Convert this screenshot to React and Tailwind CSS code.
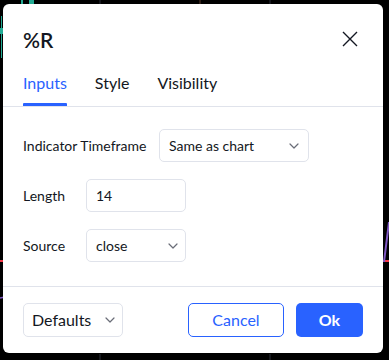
import React from 'react'

function Chevron({ className }) {
  return (
    <svg className={className} width="10" height="6" viewBox="0 0 10 6" fill="none">
      <path d="M1 1l4 4 4-4" stroke="#6a6d78" strokeWidth="1.2" strokeLinecap="round" strokeLinejoin="round" />
    </svg>
  )
}

function ChartBackdrop() {
  return (
    <svg className="absolute inset-0" width="389" height="360" viewBox="0 0 389 360">
      <line x1="0" y1="261" x2="389" y2="261" stroke="#f23645" strokeWidth="2" />
      <line x1="0" y1="298" x2="10" y2="296" stroke="#7e57c2" strokeWidth="1.5" />
      <line x1="384" y1="262" x2="389" y2="222" stroke="#7e57c2" strokeWidth="2" />
      <rect x="21" y="0" width="2" height="4" fill="#22ab94" />
      <rect x="29" y="0" width="5" height="4" fill="#22ab94" />
      <rect x="1" y="16" width="1" height="42" fill="#22ab94" />
      <rect x="0" y="28" width="3" height="6" fill="#22ab94" />
      <line x1="100" y1="0" x2="100" y2="4" stroke="#2a2e39" />
      <line x1="200" y1="0" x2="200" y2="4" stroke="#5d3a2e" />
      <line x1="270" y1="0" x2="270" y2="4" stroke="#2a2e39" />
      <line x1="100" y1="354" x2="100" y2="360" stroke="#2a2e39" />
      <line x1="270" y1="354" x2="270" y2="360" stroke="#2a2e39" />
    </svg>
  )
}

export default function App() {
  const font = { fontFamily: 'Lato, "Liberation Sans", sans-serif' }

  return (
    <div className="relative w-[389px] h-[360px] bg-black overflow-hidden" style={font}>
      <ChartBackdrop />
      <div className="relative ml-[3px] mt-[4px] w-[380px] h-[349px] bg-white rounded-[6px] flex flex-col text-[#131722]">
        {/* header */}
        <div className="h-[70px] flex items-center justify-between pl-5 pr-[25px]">
          <div className="text-[21px] font-semibold leading-none">%R</div>
          <svg width="16" height="16" viewBox="0 0 16 16" fill="none">
            <path d="M1 1l14 14M15 1L1 15" stroke="#131722" strokeWidth="1.4" />
          </svg>
        </div>

        {/* tabs */}
        <div className="h-[33px] flex gap-7 px-5 border-b border-[#e0e3eb]">
          <div className="flex flex-col justify-between">
            <span className="text-[16px] leading-[18px] text-[#2962ff]">Inputs</span>
            <span className="h-[3px] bg-[#2962ff] rounded-t-[1px]" />
          </div>
          <span className="text-[16px] leading-[18px]">Style</span>
          <span className="text-[16px] leading-[18px]">Visibility</span>
        </div>

        {/* body */}
        <div className="flex-1 flex flex-col gap-[17px] px-5 pt-[22px] text-[14px] border-b border-[#e0e3eb]">
          <div className="flex items-center h-[33px]">
            <span className="w-[136px]">Indicator Timeframe</span>
            <div className="w-[150px] h-[33px] border border-[#e0e3eb] rounded-[5px] flex items-center justify-between pl-[9px] pr-[9px]">
              <span>Same as chart</span>
              <Chevron />
            </div>
          </div>
          <div className="flex items-center h-[33px]">
            <span className="w-[63px]">Length</span>
            <div className="w-[100px] h-[33px] border border-[#e0e3eb] rounded-[5px] flex items-center pl-[9px]">
              <span>14</span>
            </div>
          </div>
          <div className="flex items-center h-[33px]">
            <span className="w-[63px]">Source</span>
            <div className="w-[100px] h-[33px] border border-[#e0e3eb] rounded-[5px] flex items-center justify-between pl-[9px] pr-[7px]">
              <span>close</span>
              <Chevron />
            </div>
          </div>
        </div>

        {/* footer */}
        <div className="h-[66px] flex items-center px-5 text-[16px]">
          <div className="w-[100px] h-[34px] border border-[#e0e3eb] rounded-[5px] flex items-center justify-between pl-[8px] pr-[7px]">
            <span>Defaults</span>
            <Chevron />
          </div>
          <div className="ml-auto flex gap-[12px]">
            <button className="w-[96px] h-[34px] border border-[#2962ff] rounded-[5px] text-[#2962ff]">Cancel</button>
            <button className="w-[67px] h-[34px] bg-[#2962ff] rounded-[5px] text-white font-bold">Ok</button>
          </div>
        </div>
      </div>
    </div>
  )
}
